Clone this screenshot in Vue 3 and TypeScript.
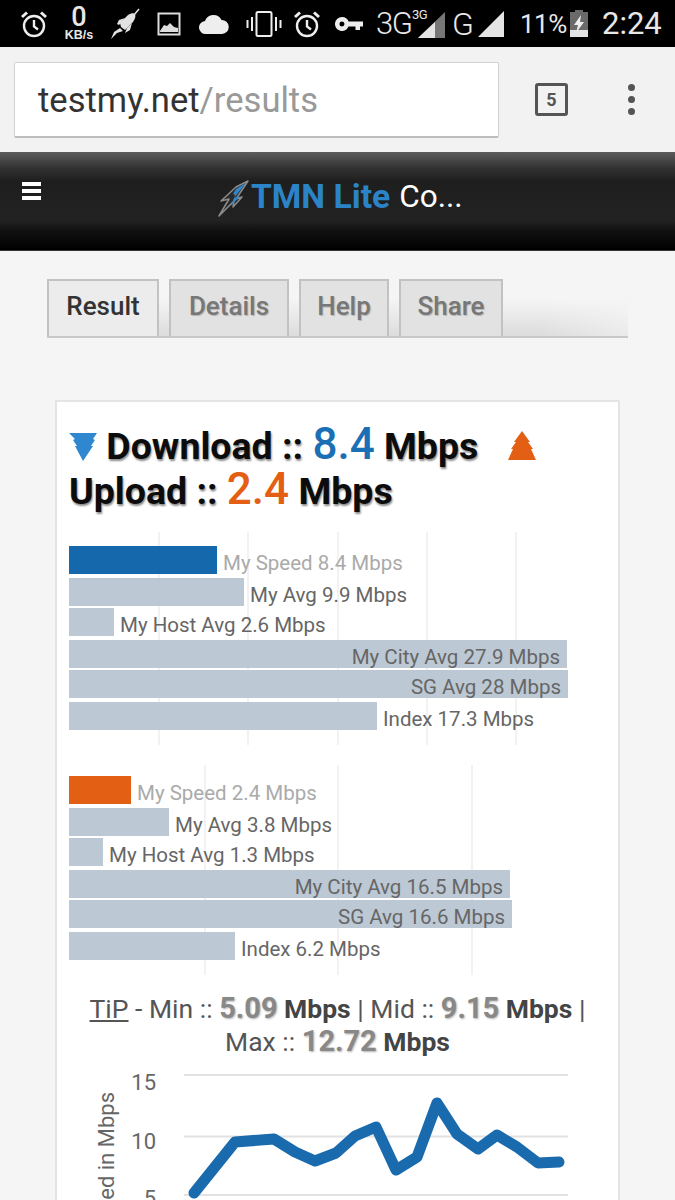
<script setup lang="ts">
interface Bar {
  label: string
  end: number
  kind: 'me' | 'plain' | 'long'
}

const chartLeft = 69

const downBars: Bar[] = [
  { label: 'My Speed 8.4 Mbps', end: 217, kind: 'me' },
  { label: 'My Avg 9.9 Mbps', end: 244, kind: 'plain' },
  { label: 'My Host Avg 2.6 Mbps', end: 114, kind: 'plain' },
  { label: 'My City Avg 27.9 Mbps', end: 567, kind: 'long' },
  { label: 'SG Avg 28 Mbps', end: 568, kind: 'long' },
  { label: 'Index 17.3 Mbps', end: 377, kind: 'plain' },
]

const upBars: Bar[] = [
  { label: 'My Speed 2.4 Mbps', end: 131, kind: 'me' },
  { label: 'My Avg 3.8 Mbps', end: 169, kind: 'plain' },
  { label: 'My Host Avg 1.3 Mbps', end: 103, kind: 'plain' },
  { label: 'My City Avg 16.5 Mbps', end: 510, kind: 'long' },
  { label: 'SG Avg 16.6 Mbps', end: 512, kind: 'long' },
  { label: 'Index 6.2 Mbps', end: 235, kind: 'plain' },
]

const downGrid = [158, 247, 337, 426, 515]
const upGrid = [204, 337, 471]

const linePoints =
  '194,1193 235,1142 274,1139 295,1152 315,1161 336,1153 355,1136 376,1127 396,1170 417,1157 437,1103 457,1134 478,1149 497,1135 517,1147 538,1163 559,1162'
</script>

<template>
  <div class="page">
    <div class="status">
      <svg class="st alarm" width="28" height="28" viewBox="0 0 28 28" fill="none" stroke="#eee" stroke-width="2.4">
        <circle cx="14" cy="16" r="10" />
        <path d="M14 10v6.500l4 3" />
        <path d="M2 7l5-4.500M26 7l-5-4.500" stroke-width="3" />
      </svg>
      <div class="st speed"><b>0</b><span>KB/s</span></div>
      <svg class="st rocket" width="30" height="32" viewBox="0 0 30 32" fill="#e2e2e2">
        <path d="M18 7c3-2 6-2 7-1 1 2 0 5-2 8l-8 8-4-3-1-4z" />
        <path d="M9 12l6-2-6 7-2-1zM22 15l-2 7-5 3 2-5z" />
        <path d="M10 20l3 3-6 2-6 6 3-7z" />
        <path d="M24 7l5-6" stroke="#e2e2e2" stroke-width="1.500" fill="none" />
      </svg>
      <svg class="st pic" width="24" height="24" viewBox="0 0 24 24" fill="none" stroke="#ddd" stroke-width="2">
        <rect x="1.500" y="1.500" width="21" height="21" />
        <path d="M3 19l4-6 3 1 3-3 4 4 4 1v4H3z" fill="#ddd" stroke="none" />
      </svg>
      <svg class="st cloud" width="30" height="22" viewBox="0 0 30 22" fill="#eee">
        <path d="M7 21a6.500 6.500 0 0 1-1-13A9 9 0 0 1 22.500 7 7 7 0 0 1 23 21z" />
      </svg>
      <svg class="st vib" width="36" height="28" viewBox="0 0 36 28" fill="none" stroke="#eee" stroke-width="2">
        <rect x="10.500" y="2" width="15" height="24" rx="1.500" />
        <path d="M1.500 10v8M6 7v14M30 7v14M34.500 10v8" />
      </svg>
      <svg class="st alarm2" width="28" height="28" viewBox="0 0 28 28" fill="none" stroke="#eee" stroke-width="2.400">
        <circle cx="14" cy="16" r="10" />
        <path d="M14 10v6.500l4 3" />
        <path d="M2 7l5-4.500M26 7l-5-4.500" stroke-width="3" />
      </svg>
      <svg class="st key" width="28" height="14" viewBox="0 0 28 14" fill="#eee">
        <path fill-rule="evenodd" d="M7 0a7 7 0 0 1 6.600 4.500H28v5h-3v3.500h-4.500V9.500h-7A7 7 0 1 1 7 0zm0 4.500a2.500 2.500 0 1 0 0 5 2.500 2.500 0 0 0 0-5z" />
      </svg>
      <span class="st net">3G</span>
      <div class="st sig1">
        <span class="mini">3G</span>
        <svg width="27" height="26" viewBox="0 0 27 26">
          <path d="M27 0v26H0z" fill="#777" />
          <path d="M17 10v16H0z" fill="#e4e4e4" />
        </svg>
      </div>
      <span class="st g">G</span>
      <svg class="st sig2" width="26" height="26" viewBox="0 0 26 26">
        <path d="M26 0v26H0z" fill="#e4e4e4" />
      </svg>
      <span class="st pct">11%</span>
      <svg class="st batt" width="18" height="27" viewBox="0 0 18 27">
        <path d="M5 0h8v2h5v25H0V2h5z" fill="#6a6a6a" />
        <path d="M0 20h18v7H0z" fill="#e4e4e4" />
        <path d="M11 5L4 15h4l-2 8 8-11h-4z" fill="#eee" />
      </svg>
      <span class="st clock">2:24</span>
    </div>

    <div class="browser">
      <div class="url"><span class="host">testmy.net</span><span class="path">/results</span></div>
      <div class="tabs-count">5</div>
      <div class="dots"><i></i><i></i><i></i></div>
    </div>

    <header class="site">
      <div class="burger"><i></i><i></i><i></i></div>
      <div class="title">
        <svg class="bolt" width="34" height="42" viewBox="0 0 34 42">
          <path d="M33 3L21 9 6 23l8-2-10 17 15-15-1 6 9-10-6 2z" fill="#2a2a2a" stroke="#8c8c8c" stroke-width="1.500" stroke-linejoin="round" />
          <path d="M31 5L21 11l-3 5 2 1-4 11 9-10-6 2z" fill="#2f86c9" />
        </svg>
        <span class="tmn">TMN Lite</span>
        <span class="co">Co...</span>
      </div>
    </header>

    <main class="content">
      <nav class="tabs">
        <a class="tab active t1">Result</a>
        <a class="tab t2">Details</a>
        <a class="tab t3">Help</a>
        <a class="tab t4">Share</a>
      </nav>

      <section class="card">
        <h1 class="head">
          <svg class="arrow" width="28" height="29" viewBox="0 0 28 29" fill="#2f87cf">
            <path d="M0 1h28l-4 6 2 1-4 6h2L14 29 6 14h2L4 8l2-1z" />
          </svg>
          Download :: <span class="num blue">8.4</span> Mbps
          <svg class="arrow up" width="30" height="30" viewBox="0 0 30 30" fill="#e35f13">
            <path d="M15 0l8 11h-2l5 7h-2l5 11H1l5-11H4l5-7H7z" />
          </svg>
          <br />
          Upload :: <span class="num orange">2.4</span> Mbps
        </h1>

        <div class="bars down">
          <i v-for="x in downGrid" :key="x" class="grid" :style="{ left: x - chartLeft + 'px' }"></i>
          <div v-for="b in downBars" :key="b.label" class="row">
            <div class="bar" :class="b.kind" :style="{ width: b.end - chartLeft + 'px' }">
              <span v-if="b.kind === 'long'" class="lbl">{{ b.label }}</span>
            </div>
            <span v-if="b.kind !== 'long'" class="lbl" :class="{ faded: b.kind === 'me' }">{{ b.label }}</span>
          </div>
        </div>

        <div class="bars upl">
          <i v-for="x in upGrid" :key="x" class="grid" :style="{ left: x - chartLeft + 'px' }"></i>
          <div v-for="b in upBars" :key="b.label" class="row">
            <div class="bar" :class="b.kind" :style="{ width: b.end - chartLeft + 'px' }">
              <span v-if="b.kind === 'long'" class="lbl">{{ b.label }}</span>
            </div>
            <span v-if="b.kind !== 'long'" class="lbl" :class="{ faded: b.kind === 'me' }">{{ b.label }}</span>
          </div>
        </div>

        <p class="tip">
          <u>TiP</u> - Min :: <b class="val">5.09</b> <b>Mbps</b> | Mid :: <b class="val">9.15</b> <b>Mbps</b> |<br />
          Max :: <b class="val">12.72</b> <b>Mbps</b>
        </p>

        <svg class="line" width="565" height="150" viewBox="55 1050 565 150">
          <path d="M184 1075H568M184 1136.500H568M184 1195H568" stroke="#e2e2e2" stroke-width="2" fill="none" />
          <text x="156" y="1090" text-anchor="end" class="ax">15</text>
          <text x="156" y="1149" text-anchor="end" class="ax">10</text>
          <text x="156" y="1206" text-anchor="end" class="ax">5</text>
          <text transform="translate(114 1092) rotate(-90)" text-anchor="end" class="ax">Speed in Mbps</text>
          <polyline :points="linePoints" fill="none" stroke="#1a6aae" stroke-width="11" stroke-linejoin="round" stroke-linecap="round" />
        </svg>
      </section>
    </main>
  </div>
</template>

<style scoped>
.page {
  position: relative;
  width: 675px;
  height: 1200px;
  overflow: hidden;
  background: #f5f5f5;
  font-family: Roboto, 'Liberation Sans', sans-serif;
  color: #333;
}

/* status bar */
.status {
  display: flex;
  align-items: center;
  height: 47px;
  background: #000;
  color: #e8e8e8;
}
.st {
  flex: none;
}
.alarm {
  margin-left: 20px;
}
.speed {
  display: flex;
  flex-direction: column;
  align-items: center;
  width: 34px;
  margin-left: 14px;
}
.speed b {
  font-size: 27px;
  font-weight: 500;
  line-height: 22px;
}
.speed span {
  margin-top: 1px;
  font-size: 12.500px;
  line-height: 13px;
  font-weight: 700;
  font-family: 'Liberation Sans', sans-serif;
}
.rocket {
  margin-left: 14px;
}
.pic {
  margin-left: 17px;
}
.cloud {
  margin-left: 18px;
}
.vib {
  margin-left: 17px;
}
.alarm2 {
  margin-left: 11px;
}
.key {
  margin-left: 14px;
}
.net {
  margin-left: 13px;
  width: 36px;
  font-size: 31px;
  font-weight: 300;
  letter-spacing: -1.500px;
  line-height: 1;
}
.sig1 {
  position: relative;
  width: 33px;
  height: 28px;
  display: flex;
  align-items: flex-end;
  justify-content: flex-end;
}
.mini {
  position: absolute;
  left: 0;
  top: -3px;
  font-size: 13px;
  letter-spacing: -0.500px;
  z-index: 1;
}
.g {
  font-size: 32px;
  font-weight: 300;
  width: 26px;
  line-height: 1;
  margin-left: 7px;
}
.pct {
  margin-left: 16px;
  width: 50px;
  font-size: 26px;
  letter-spacing: -0.500px;
  line-height: 1;
}
.clock {
  margin-left: 14px;
  font-size: 31px;
  line-height: 1;
}

/* browser toolbar */
.browser {
  display: flex;
  align-items: center;
  height: 105px;
  background: #f2f2f2;
  padding-left: 14px;
  box-sizing: border-box;
}
.url {
  width: 485px;
  height: 76px;
  box-sizing: border-box;
  padding-left: 23px;
  line-height: 74px;
  font-size: 34.600px;
  background: #fff;
  border: 1px solid #d0d0d0;
  border-bottom: 2px solid #bdbdbd;
  border-radius: 2px;
  margin-top: 1px;
}
.host {
  color: #333;
}
.path {
  color: #999;
}
.tabs-count {
  width: 33px;
  height: 33px;
  box-sizing: border-box;
  margin-left: 36px;
  border: 3px solid #555;
  border-radius: 3px;
  font-size: 18px;
  font-weight: 700;
  color: #555;
  text-align: center;
  line-height: 27px;
}
.dots {
  display: flex;
  flex-direction: column;
  gap: 5px;
  margin-left: 60px;
}
.dots i {
  width: 7px;
  height: 7px;
  border-radius: 50%;
  background: #555;
}

/* site header */
.site {
  position: relative;
  height: 99px;
  box-sizing: border-box;
  background: linear-gradient(#5c5c5c 0, #333 16%, #1e1e1e 30%, #222 70%, #111 80%, #000 100%);
  border-bottom: 1px solid #333;
}
.burger {
  position: absolute;
  left: 22px;
  top: 30px;
  display: flex;
  flex-direction: column;
  gap: 3px;
}
.burger i {
  width: 19px;
  height: 4px;
  background: #fff;
}
.title {
  display: flex;
  align-items: center;
  height: 88px;
  padding-left: 215px;
}
.bolt {
  flex: none;
  margin-top: 6px;
}
.tmn {
  margin-left: 2px;
  font-size: 33.700px;
  font-weight: 700;
  color: #2b84c8;
}
.co {
  margin-left: 9px;
  font-size: 31.500px;
  color: #fff;
}

/* tabs */
.content {
  padding: 28px 47px 0;
}
.tabs {
  display: flex;
  gap: 10px;
  height: 57px;
  border-bottom: 2px solid #c9c9c9;
  background: linear-gradient(90deg, rgba(245, 245, 245, 0) 85%, rgba(245, 245, 245, 0.6) 100%), linear-gradient(#f5f5f5 35%, #dcdcdc 100%);
}
.tab {
  box-sizing: border-box;
  height: 57px;
  border: 2px solid #c2c2c2;
  border-bottom: none;
  background: #e2e2e2;
  color: #777;
  font-size: 26px;
  font-weight: 500;
  line-height: 50px;
  text-align: center;
  text-shadow: 1px 1px 1px rgba(0, 0, 0, 0.2);
}
.tab.active {
  background: #ececec;
  color: #333;
  text-shadow: none;
}
.t1 {
  width: 112px;
}
.t2 {
  width: 120px;
}
.t3 {
  width: 90px;
}
.t4 {
  width: 104px;
}

/* result card */
.card {
  width: 565px;
  box-sizing: border-box;
  height: 900px;
  margin: 62px 0 0 8px;
  padding: 22px 12px 0;
  background: #fff;
  border: 2px solid #e4e4e4;
}
.head {
  margin: 0;
  font-size: 37.500px;
  font-weight: 700;
  line-height: 45px;
  color: #0c0c0c;
  text-shadow: 1px 2px 2px rgba(0, 0, 0, 0.45);
  white-space: nowrap;
}
.arrow {
  vertical-align: -2px;
}
.arrow.up {
  margin-left: 19px;
}
.num {
  font-size: 44px;
  font-weight: 500;
  line-height: 0;
  text-shadow: none;
}
.blue {
  color: #1a6fb5;
}
.orange {
  color: #e35f13;
}
.bars {
  position: relative;
  display: flex;
  flex-direction: column;
  gap: 2px;
}
.bars.down {
  margin-top: 18px;
  padding: 14px 0 15px;
}
.bars.upl {
  margin-top: 20px;
  padding: 11px 0 15px;
}
.grid {
  position: absolute;
  top: 0;
  bottom: 0;
  width: 2px;
  background: #f2f2f2;
}
.row {
  position: relative;
  display: flex;
  align-items: center;
  height: 28px;
}
.row:nth-of-type(even) {
  margin-top: 2px;
}
.bar {
  flex: none;
  height: 28px;
  background: #bcc8d3;
}
.bar.long {
  display: flex;
  align-items: center;
  justify-content: flex-end;
  padding-right: 7px;
  box-sizing: border-box;
}
.me.bar {
  background: #1668ac;
}
.upl .me.bar {
  background: #e35f13;
}
.lbl {
  margin-left: 6px;
  padding-top: 6px;
  font-size: 20.500px;
  color: #666;
  white-space: nowrap;
}
.long .lbl {
  margin-left: 0;
}
.lbl.faded {
  color: #aaa;
}
.tip {
  margin: 17px 0 0;
  font-size: 26.500px;
  line-height: 32px;
  text-align: center;
  color: #555;
  white-space: nowrap;
}
.tip b {
  font-weight: 700;
  color: #444;
}
.tip .val {
  font-size: 29px;
  color: #888;
  text-shadow: 1px 1px 2px rgba(0, 0, 0, 0.3);
}
.line {
  display: block;
  margin: -8px 0 0 -14px;
}
.ax {
  font-family: Roboto, 'Liberation Sans', sans-serif;
  font-size: 22px;
  fill: #666;
}
</style>

<style>
html,
body {
  margin: 0;
  background: #f5f5f5;
}
</style>
